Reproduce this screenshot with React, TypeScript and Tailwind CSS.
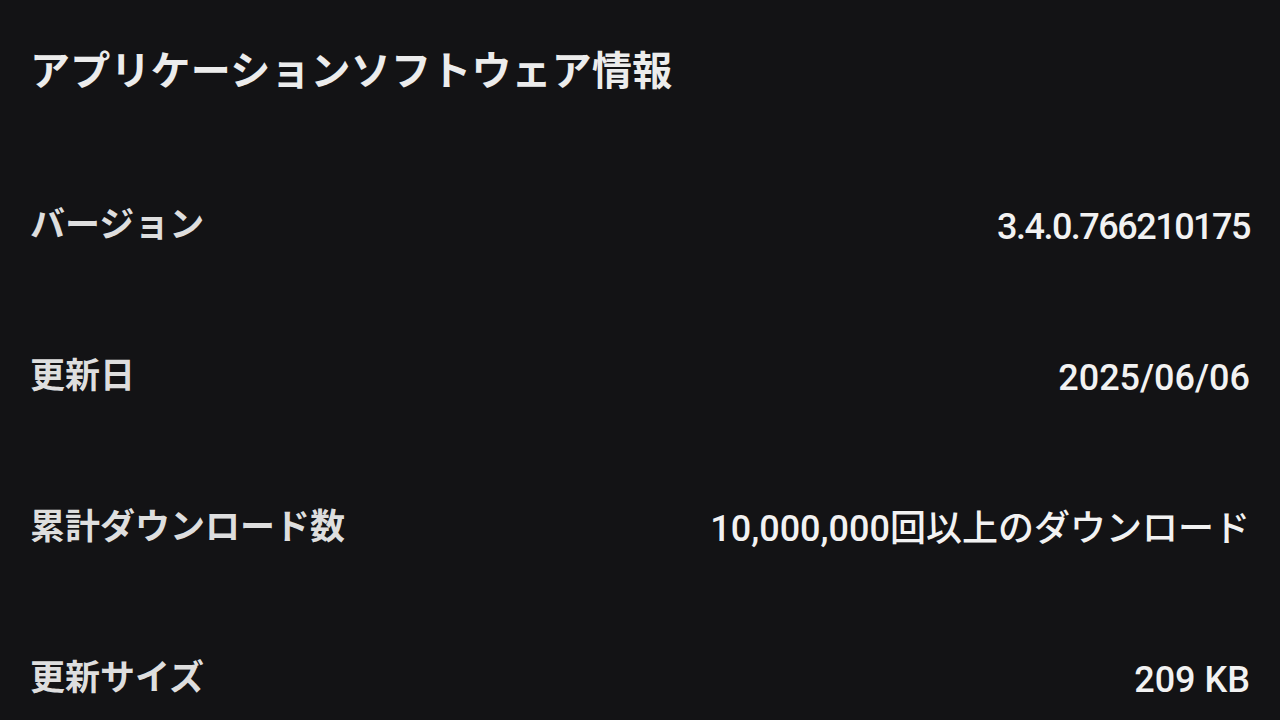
import React from 'react';

const rows = [
  { label: 'バージョン', value: '3.4.0.766210175', tight: true },
  { label: '更新日', value: '2025/06/06', tight: false },
  { label: '累計ダウンロード数', value: '10,000,000回以上のダウンロード', tight: false },
  { label: '更新サイズ', value: '209 KB', tight: false },
];

const App = () => {
  return (
    <div
      className="w-[1280px] h-[720px] overflow-hidden bg-[#131315] px-[30px]"
      style={{ fontFamily: 'Roboto, "Noto Sans CJK JP", sans-serif' }}
    >
      {/* Title */}
      <div className="h-[151px] flex items-center pb-[7px]">
        <h1 className="text-[40px] font-bold text-[#ececec] tracking-[0.2px]">
          アプリケーションソフトウェア情報
        </h1>
      </div>

      {/* Info rows */}
      {rows.map((row) => (
        <div key={row.label} className="h-[151px] flex items-center justify-between">
          <span className="text-[35px] font-bold text-[#dedede]">{row.label}</span>
          <span
            className={`text-[36px] font-medium text-[#f2f2f2] ${row.tight ? 'tracking-[-1.5px]' : ''}`}
          >
            {row.value}
          </span>
        </div>
      ))}
    </div>
  );
};

export default App;
